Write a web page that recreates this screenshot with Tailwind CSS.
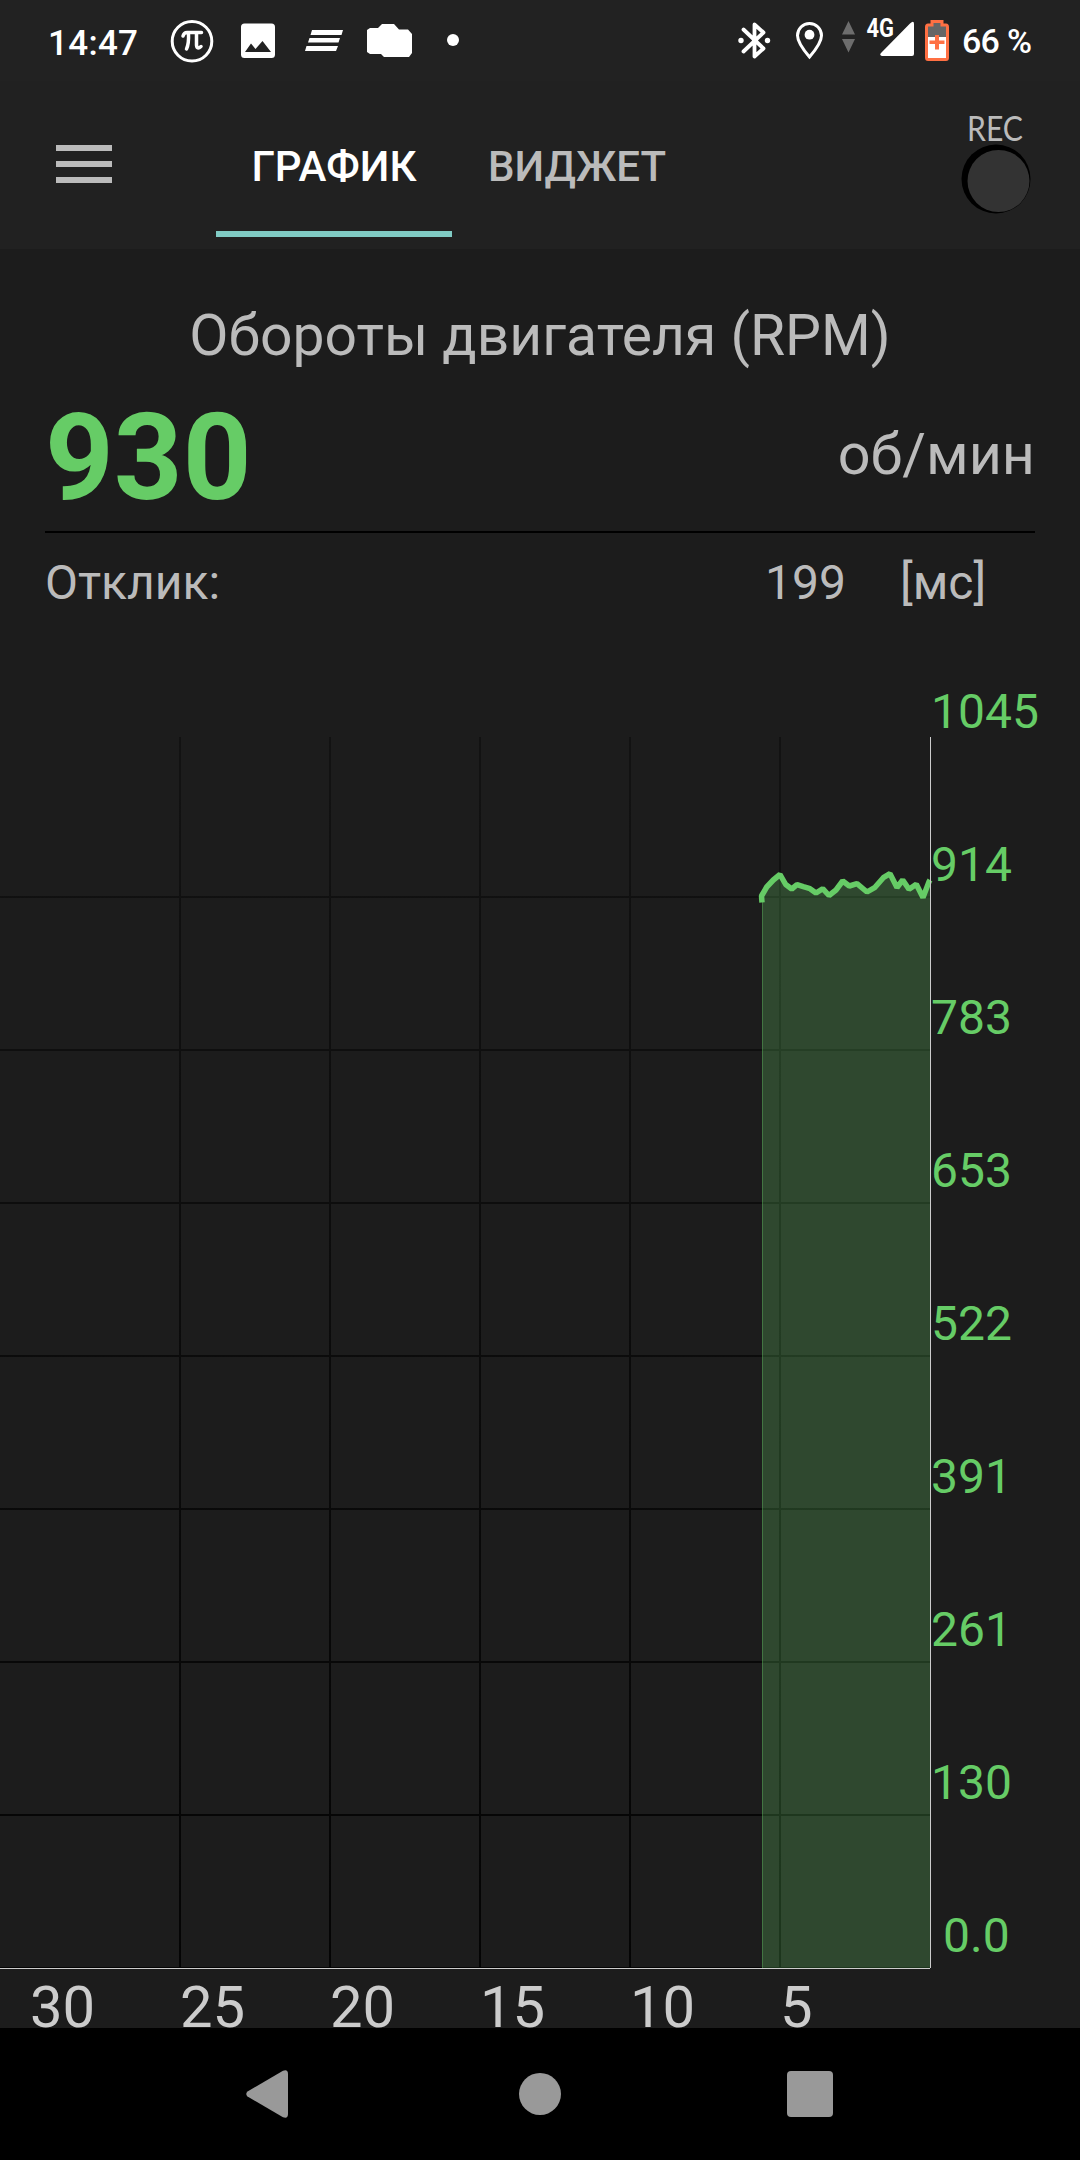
<!DOCTYPE html>
<html lang="ru">
  <head>
    <meta charset="UTF-8" />
    <meta name="viewport" content="width=device-width, initial-scale=1.0" />
    <title>Обороты двигателя</title>
    <script src="https://cdn.jsdelivr.net/npm/@tailwindcss/browser@4"></script>
  </head>
  <body class="bg-black">
    <div
      class="flex h-[2160px] w-[1080px] flex-col overflow-hidden bg-[#1c1c1c] font-[Roboto,sans-serif] text-[#bbb]"
    >
      <!-- Status bar -->
      <div class="h-[81px] shrink-0 bg-[#222]">
        <svg class="block h-[81px] w-[1080px]" viewBox="0 0 1080 81" fill="#fff">
          <text x="48" y="55" font-size="35" font-weight="500" textLength="90">14:47</text>
          <circle cx="192" cy="41.300" r="19.800" fill="none" stroke="#fff" stroke-width="3" />
          <path
            d="M183 36Q184 32.500 187 32.500H201.500M188.500 33Q189 44 186.500 49M196.500 33V45Q197 50 201 46.500"
            fill="none"
            stroke="#fff"
            stroke-width="3.500"
            stroke-linecap="round"
          />
          <path
            fill-rule="evenodd"
            d="M244.500 23.500H271.500Q275 23.500 275 27V54.500Q275 58 271.500 58H244.500Q241 58 241 54.500V27Q241 23.500 244.500 23.500ZM245 52H271L262.500 41L255.500 49L251 43.500Z"
          />
          <path d="M312 30H343L341.500 35H310.500ZM309.500 38H340L338.500 42.500H308ZM306.500 46H338L336 51H305Z" />
          <path
            d="M370 28H378L382 24H394L399 29.500H408L412 34V53L409 57H384L381 54H370L367 52V30Z"
          />
          <circle cx="453" cy="40" r="6" />

          <!-- Bluetooth -->
          <path
            d="M743.500 29.500L763.500 48.500L754.500 56.500V24.500L763.500 32.500L743.500 51.500"
            fill="none"
            stroke="#fff"
            stroke-width="3.800"
            stroke-linecap="round"
            stroke-linejoin="round"
          />
          <circle cx="741" cy="40.500" r="2.700" />
          <circle cx="767.500" cy="40.500" r="2.700" />
          <!-- Location -->
          <path
            fill="none"
            stroke="#fff"
            stroke-width="3"
            d="M809.500 57Q797.500 43 797.500 35.500A12 12 0 0 1 821.500 35.500Q821.500 43 809.500 57Z"
          />
          <circle cx="809.500" cy="34.700" r="4.900" />
          <!-- Data arrows -->
          <path fill="#6d6d6d" d="M848.500 21L855 34.500H842ZM842 39H855L848.500 52.500Z" />
          <text x="866.500" y="37.300" font-size="26" font-weight="700" textLength="27.500" lengthAdjust="spacingAndGlyphs">4G</text>
          <path d="M914 24V54Q914 56 912 56H882Q879 55 881 53L910 23.500Q914 20 914 24Z" />
          <!-- Battery -->
          <path
            d="M932 21.500H942V25H946Q947.500 25 947.500 27V57.500Q947.500 59.500 946 59.500H928Q926.500 59.500 926.500 57.500V27Q926.500 25 928 25H932Z"
            fill="#666"
            stroke="#ff7043"
            stroke-width="3"
          />
          <path d="M928 37H946V58H928Z" />
          <path d="M935 35H939V40.500H944.500V44H939V49.500H935V44H929.500V40.500H935Z" fill="#ff7043" />
          <text x="962" y="53" font-size="34" font-weight="500" textLength="70">66 %</text>
        </svg>
      </div>

      <!-- Toolbar -->
      <div class="flex h-[168px] shrink-0 bg-[#212121]">
        <div class="flex w-[216px] flex-col gap-[10px] pt-16 pl-14">
          <div class="h-1.5 w-14 bg-[#bbb]"></div>
          <div class="h-1.5 w-14 bg-[#bbb]"></div>
          <div class="h-1.5 w-14 bg-[#bbb]"></div>
        </div>
        <div
          class="mb-3 flex w-[236px] items-center justify-center border-b-6 border-[#80cbc4] pt-5 text-[42px] font-medium text-white"
        >
          ГРАФИК
        </div>
        <div
          class="mb-3 flex w-[250px] items-center justify-center border-b-6 border-transparent pt-5 text-[42px] font-medium"
        >
          ВИДЖЕТ
        </div>
        <svg class="ml-auto block h-[168px] w-[140px]" viewBox="940 81 140 168">
          <text x="967" y="141" font-size="34" textLength="56" lengthAdjust="spacingAndGlyphs" fill="#bbb" class="font-[Lato,sans-serif]">REC</text>
          <circle cx="996" cy="179" r="34.500" fill="#000" />
          <circle cx="998.500" cy="181" r="31" fill="#333" />
        </svg>
      </div>

      <!-- Sensor header -->
      <div class="flex h-[391px] shrink-0 flex-col px-[45px]">
        <h1 class="mt-[52px] h-[70px] text-center text-[57px] leading-[70px]">
          Обороты двигателя (RPM)
        </h1>
        <div class="mt-3 flex h-[148px] items-center justify-between">
          <span class="pt-px text-[120px] leading-none font-bold text-[#66cc66]">930</span>
          <span class="pb-1 text-[57.500px] leading-none">об/мин</span>
        </div>
        <div class="h-0.5 shrink-0 bg-black"></div>
        <div class="mt-[22px] flex h-14 text-[48px] leading-[56px]">
          <span>Отклик:</span>
          <span class="ml-auto">199</span>
          <span class="ml-[54px] w-[135px]">[мс]</span>
        </div>
      </div>

      <!-- Chart -->
      <svg class="block h-[1388px] w-[1080px] shrink-0 overflow-visible" viewBox="0 640 1080 1388">
        <defs>
          <linearGradient id="fade" gradientUnits="userSpaceOnUse" x1="0" y1="737" x2="0" y2="1968">
            <stop offset="0" stop-color="#000" stop-opacity="0.35" />
            <stop offset="1" stop-color="#000" stop-opacity="0.85" />
          </linearGradient>
        </defs>
        <path
          fill="url(#fade)"
          d="M179 737h2V1968h-2ZM329 737h2V1968h-2ZM479 737h2V1968h-2ZM629 737h2V1968h-2ZM779 737h2V1968h-2ZM0 896H930v2H0ZM0 1049H930v2H0ZM0 1202H930v2H0ZM0 1355H930v2H0ZM0 1508H930v2H0ZM0 1661H930v2H0ZM0 1814H930v2H0ZM0 1967H930v1H0Z"
        />
        <path
          fill="#66cc66"
          fill-opacity="0.25"
          d="M762 1968V897L766.700 887L773.300 880L780 874.500L785.700 884.500L791.700 889L797 884.700L803.300 886.700L810 888.700L816 893L822.700 888.700L829 895.500L836 890L842.700 881L849.300 886L857 883.700L867 892L875 887.300L883.300 877.700L890 873.700L897 887.500L902.700 880L909 889.300L916.300 884.300L923 897.500L929 881.700L930 880V1968Z"
        />
        <path fill="#66cc66" fill-opacity="0.35" d="M762 900h1V1968h-1Z" />
        <path
          fill="none"
          stroke="#66cc66"
          stroke-width="5.500"
          stroke-linejoin="bevel"
          d="M762 902.500L761.500 896L766.700 887L773.300 880L780 874.500L785.700 884.500L791.700 889L797 884.700L803.300 886.700L810 888.700L816 893L822.700 888.700L829 895.500L836 890L842.700 881L849.300 886L857 883.700L867 892L875 887.300L883.300 877.700L890 873.700L897 887.500L902.700 880L909 889.300L916.300 884.300L923 897.500L929 881.700L930 880"
        />
        <path fill="#ccc" d="M930 737h1V1968h-1ZM0 1968H930v1H0Z" />
        <g fill="#66cc66" font-size="48">
          <text x="931" y="728">1045</text>
          <text x="931" y="881">914</text>
          <text x="931" y="1034">783</text>
          <text x="931" y="1187">653</text>
          <text x="931" y="1340">522</text>
          <text x="931" y="1493">391</text>
          <text x="931" y="1646">261</text>
          <text x="931" y="1799">130</text>
          <text x="943" y="1952">0.0</text>
        </g>
        <g fill="#ccc" font-size="58">
          <text x="30" y="2027">30</text>
          <text x="180" y="2027">25</text>
          <text x="330" y="2027">20</text>
          <text x="480" y="2027">15</text>
          <text x="630" y="2027">10</text>
          <text x="780" y="2027">5</text>
        </g>
      </svg>

      <!-- Navigation bar -->
      <div class="flex h-[132px] shrink-0 items-center bg-black pl-[246px]">
        <svg class="h-12 w-[42px]" viewBox="0 0 42 48">
          <path d="M1.500 21.500L37 .8Q42 -1 42 4V44Q42 49 37 47.200L1.500 26.500Q-1 24 1.500 21.500Z" fill="#999" />
        </svg>
        <div class="ml-[231px] size-[42px] rounded-full bg-[#999]"></div>
        <div class="ml-[226px] size-[46px] rounded bg-[#999]"></div>
      </div>
    </div>
  </body>
</html>
